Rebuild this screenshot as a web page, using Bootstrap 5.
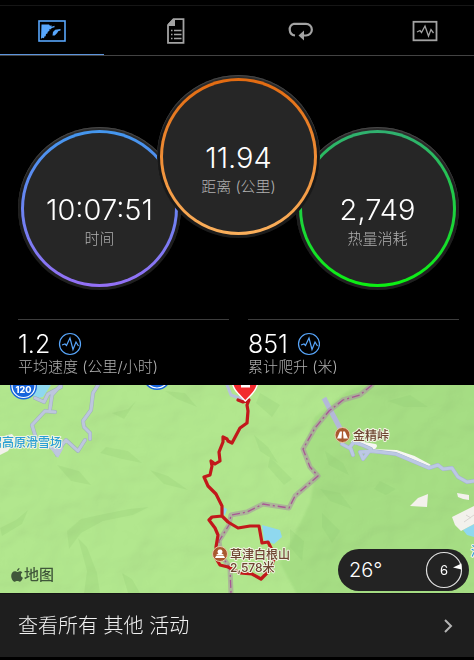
<!DOCTYPE html>
<html lang="zh-CN">
<head>
<meta charset="utf-8">
<meta name="viewport" content="width=device-width, initial-scale=1">
<title>活动</title>
<link href="https://cdn.jsdelivr.net/npm/bootstrap@5.3.0/dist/css/bootstrap.min.css" rel="stylesheet">
<style>
  body { background: #000; color: #fff; font-family: Inter, "Noto Sans CJK SC", sans-serif; }
  .tabs-bar { margin-top: 5px; height: 49px; gap: 20px; border-top: 1px solid #161616; border-bottom: 1px solid #434343; box-sizing: content-box; }
  .tab-btn { flex: 0 0 22%; height: 50px; padding: 2px 0 0; background: none; border: 0; border-bottom: 2px solid transparent; color: #a3a3a3; }
  .tab-btn.active { color: #58a6fb; border-bottom-color: #5c94dc; }
  .tab-btn svg { display: block; }
  .gauges { padding: 19px 0 29px 3px; }
  .gauge { flex: 0 0 163px; height: 163px; margin: 52px -12px 0; padding: 3px; border-radius: 50%; background: linear-gradient(#2c2c2c, #1c1c1c 40%, #202020); box-shadow: inset 0 1px 1px #4a4a4a; }
  .gauge.front { z-index: 1; margin-top: 0; background: linear-gradient(#2c2c2c, #161616 40%, #1c1c1c); }
  .dial { height: 100%; padding-top: 61px; border: 3px solid transparent; border-radius: 50%; }
  .dial-time { background: linear-gradient(#262626, #262626) padding-box, linear-gradient(#4397ee, #9470f6) border-box; }
  .dial-dist { background: linear-gradient(#262626, #262626) padding-box, linear-gradient(#e26a10, #fbb05c) border-box; }
  .dial-heat { background: linear-gradient(#262626, #262626) padding-box, linear-gradient(#30b070, #0cf012) border-box; }
  .big-num { font-size: 29px; line-height: 32px; font-weight: 350; margin-bottom: 3px; }
  .caption-text { font-size: 15px; line-height: 20px; font-weight: 300; color: #b0b0b0; white-space: nowrap; }
  .stats { padding: 0 15px 8px 18px; gap: 19px; }
  .stat { flex: 1 1 0; border-top: 1px solid #3d3d3d; padding-top: 11px; }
  .stat-num { font-size: 25px; line-height: 26px; font-weight: 350; }
  .map-box { height: 208px; }
  .map-box > svg { display: block; width: 100%; height: 100%; }
  .map-label { font-family: Inter, "Noto Sans CJK SC", sans-serif; font-weight: 500; font-size: 12px; fill: #6d4430; paint-order: stroke; stroke: #f0f4e2; stroke-width: 2px; stroke-linejoin: round; }
  .map-label.resort { fill: #2a9fd4; }
  .map-credit { left: 11px; bottom: 7px; gap: 1px; color: #40573a; font-size: 15px; line-height: 22px; font-weight: 500; }
  .weather { right: 5px; bottom: 2px; width: 131px; height: 42px; padding: 0 6px 0 11px; border-radius: 21px; background: #232323; font-size: 20px; font-weight: 300; }
  .see-all { padding: 18px; height: 64px; background: #1e1e1e; border-top: 1px solid #151515; color: #f2f2f2; font-size: 20px; font-weight: 300; line-height: 28px; }
  .see-all:hover { color: #fff; }
</style>
<script src="https://cdn.jsdelivr.net/npm/bootstrap@5.3.0/dist/js/bootstrap.bundle.min.js"></script>
</head>
<body>
<nav class="tabs-bar d-flex overflow-hidden" aria-label="活动视图">
  <button type="button" class="tab-btn active d-flex align-items-center justify-content-center" aria-label="概览">
    <svg width="28" height="22" viewBox="0 0 28 22"><rect x="1" y="1" width="26" height="20" fill="none" stroke="currentColor" stroke-width="1.6"/><path fill="currentColor" d="M3.500 4.500h7.500l1 1.200 1.500-.4v1.400l3-.9v1.500l-2.700.8-1 1.200-1.800.3.600 1.200-1.800 1-.4 1.700-1.400.5-.4 2.200-1.200.3-.4 1.800-1.500-.6-1.500 1zM15 12l2.200-2.200L22.500 9v1.600l-2.300.6-1 1.800-2.500 2.600H14.500z"/></svg>
  </button>
  <button type="button" class="tab-btn d-flex align-items-center justify-content-center" aria-label="统计">
    <svg width="20" height="26" viewBox="0 0 20 26"><path d="M7.500 1.200h10v23.600H2V7z" fill="none" stroke="currentColor" stroke-width="1.800"/><path d="M2 8V6l5-5h2v7z" fill="currentColor"/><path d="M5 12.500h1.500m1.500 0h7.500M5 16.500h1.500m1.500 0h7.500M5 20.500h1.500m1.500 0h7.500" stroke="currentColor" stroke-width="1.500"/></svg>
  </button>
  <button type="button" class="tab-btn d-flex align-items-center justify-content-center" aria-label="计圈">
    <svg width="28" height="20" viewBox="0 0 28 20"><path d="M8 14.500A6 6 0 0 1 7 2.800h12a5.800 5.800 0 0 1 0 11.700h-3" fill="none" stroke="currentColor" stroke-width="2.200"/><path d="M11.500 14.500l5.500-5v10z" fill="currentColor"/></svg>
  </button>
  <button type="button" class="tab-btn d-flex align-items-center justify-content-center" aria-label="图表">
    <svg width="26" height="22" viewBox="0 0 26 22"><rect x="1.500" y="1.800" width="23" height="18.500" fill="none" stroke="currentColor" stroke-width="1.800"/><path d="M5 12l3-1.500 1.500 2L13 6l3.500 10 2.500-6.500 2.500 3.500" fill="none" stroke="currentColor" stroke-width="1.300"/></svg>
  </button>
</nav>

<main>
  <section class="gauges d-flex justify-content-center text-center">
    <div class="gauge"><div class="dial dial-time"><div class="big-num">10:07:51</div><div class="caption-text">时间</div></div></div>
    <div class="gauge front position-relative"><div class="dial dial-dist"><div class="big-num">11.94</div><div class="caption-text">距离 (公里)</div></div></div>
    <div class="gauge"><div class="dial dial-heat"><div class="big-num">2,749</div><div class="caption-text">热量消耗</div></div></div>
  </section>

  <section class="stats d-flex">
    <div class="stat">
      <div class="d-flex align-items-center gap-2"><span class="stat-num">1.2</span>
        <svg width="24" height="24" viewBox="0 0 24 24" fill="none" stroke="#58a6fb"><circle cx="12" cy="12" r="10.500" stroke-width="1.200"/><path d="M4 13l3-1 1.500 1.500L12 6l3 11.500L18 10l2.500 4" stroke-width="1.200"/></svg></div>
      <div class="caption-text">平均速度 (公里/小时)</div>
    </div>
    <div class="stat">
      <div class="d-flex align-items-center gap-2"><span class="stat-num">851</span>
        <svg width="24" height="24" viewBox="0 0 24 24" fill="none" stroke="#58a6fb"><circle cx="13" cy="12" r="10.500" stroke-width="1.200"/><path d="M5 13l3-1 1.500 1.500L13 6l3 11.500L19 10l2.500 4" stroke-width="1.200"/></svg></div>
      <div class="caption-text">累计爬升 (米)</div>
    </div>
  </section>

  <section class="map-box position-relative overflow-hidden">
    <svg viewBox="0 0 474 208" preserveAspectRatio="xMidYMid slice" role="img" aria-label="路线地图">
      <defs>
        <filter id="relief" x="0" y="0" width="100%" height="100%">
          <feTurbulence type="fractalNoise" baseFrequency=".02 .024" numOctaves="3" seed="8"/>
          <feColorMatrix values="0 0 0 0 0  0 0 0 0 0  0 0 0 0 0  1 0 0 0 0"/>
          <feDiffuseLighting surfaceScale="9" lighting-color="#fff"><feDistantLight azimuth="225" elevation="60"/></feDiffuseLighting>
        </filter>
        <filter id="soften"><feGaussianBlur stdDeviation="1"/></filter>
        <path id="roads" d="M61 0L52 10 50 24M61 2L48 9 44 17 35 13M55 27L45 26 32 40 36 53 44 60 54 63 57 70 62 60 66 55 78 66 85 55M98 0L93 8 91 25 83 36 84 42 90 48 90 54"/>
        <path id="pass-road" d="M342 59L351 64 353 70 350 62 354 57 362 60 371 64 363 74 360 67 372 66 396 69 429 83 438 80 443 84 452 83 458 92 467 97 474 96"/>
        <path id="border-line" d="M372 0L360 10 343 15 329 26 315 43 303 64 310 82 318 91 295 111 289 123 263 119 247 127 231 130 229 140 219 156 221 170 230 183 231 208"/>
      </defs>
      <rect width="474" height="208" fill="#b2e78e"/>
      <path d="M372 -5h110v220H300l-20-37 30-60 5-28-12-26 12-32 30-24z" fill="#a6de84" filter="url(#soften)"/>
      <rect width="474" height="208" filter="url(#relief)" opacity=".12" style="mix-blend-mode:multiply"/>
      <g fill="#8fc771" opacity=".22">
        <path d="M57 80l22 6 12 14-20-4zM106 62l22 4 14 12-20-4-22-6zM0 143l16-8 12-10-6 14-20 12zM78 153l9 9 10 26 3 20H84l3-22zM67 146l14-12 18-4 30-6 20-2-16 8-30 6-22 12-12 16zM122 188l10 6 8 14h-12zM112 28l16-4 8-8-12 18zM165 6l20 2 12 14-20-8zM150 85l18 6 20 14-24-6z"/>
        <path d="M260 8l20 12-8 12-16-14zM254 50l14 12 10 16-18-12zM270 72l22 22-8 6-16-18zM325 66l18 12 6 12-20-10zM320 104l20 4 12 16-22-8zM380 96l16 8-10 6-12-6zM322 128l18 18-8 12-10-16zM388 16l22-6 18 12-24 0zM290 144l14 12-2 20-12-14z"/>
      </g>
      <g fill="#8fd8ef">
        <path d="M36 0h15l-8 12-10 2zM262 140l18 5 2 7-8 7-10-4zM223 122l4 2-2 6-3-1zM463 145l11-6v13l-7-2z"/>
      </g>
      <path d="M0 52l12-3 4 5-8 12-8 4zM410 121l8-8 10-4-1 13zM457 108l12 2v5l-6-1-5-2zM452 132l10-5 12-6v18l-13 7-6-6z" fill="#f3f1ec"/>
      <path d="M464 137l10-7M466 130l5 3" stroke="#d8d4d0" fill="none"/>
      <g fill="none" stroke-linejoin="round" stroke-linecap="round">
        <use href="#roads" stroke="#9db0b9" stroke-width="4"/>
        <use href="#roads" stroke="#bdc6de" stroke-width="3"/>
        <path d="M49 61l14 2-5 9z" fill="#bdc6de" stroke="#bdc6de"/>
        <path d="M227 0L231 10 242 14" stroke="#b7c2dc" stroke-width="3"/>
        <path d="M324 13L342 47" stroke="#b3b8d8" stroke-width="5" stroke-linecap="butt"/>
        <path d="M353 57L375 61 371 66 396 67 414 73 429 81" stroke="#f6f6f2" stroke-width="4"/>
        <use href="#pass-road" stroke="#a4b2cf" stroke-width="4"/>
        <use href="#pass-road" stroke="#bcc8e4" stroke-width="3"/>
        <use href="#border-line" stroke="#a895a0" stroke-width="5" opacity=".6"/>
        <use href="#border-line" stroke="#a85894" stroke-width="1.300" stroke-dasharray="8 3 2 3" stroke-linecap="butt"/>
        <path d="M238 15L243 17 249 15 247 20 248 26 247 38 240 43 232 58 228 56 227 54 223 52 223 57 219 67 220 76 215 79 211 76 212 81 210 90 204 92 208 101 216 109 222 121 222 131 212 132 209 135 215 143 218 150 216 162 217 175 220 180 228 182 240 188 252 189 261 194 270 185 274 174 272 165 268 157 262 158 259 141 250 141 238 143 228 137 222 131" stroke="#c2181b" stroke-width="3.200"/>
      </g>
      <g>
        <circle cx="23.500" cy="1" r="13.500" fill="#1765dc"/><circle cx="23.500" cy="1" r="11.500" fill="#1765dc" stroke="#fff" stroke-width="1.200"/>
        <text x="23.500" y="8" text-anchor="middle" fill="#fff" font-family="Inter, sans-serif" font-size="9" font-weight="800">120</text>
        <circle cx="157" cy="-9" r="14" fill="#1765dc"/><circle cx="157" cy="-9" r="12" fill="#1765dc" stroke="#fff" stroke-width="1.200"/>
      </g>
      <path d="M232-4c1 9 7 13 13.300 20C252 9 257 5 258-4z" fill="#f22c2f" stroke="#fff" stroke-width="1.400"/><path d="M241 0h9v2.500h-9z" fill="#fff"/>
      <g fill="#a9582f" stroke="#e5c9a8" stroke-width="1"><circle cx="342.500" cy="50" r="7.500"/><circle cx="220" cy="169" r="7.500"/></g>
      <path d="M337 53.500l3-7h2l-.5 7zM348 53.500l-3-7h-2l.5 7zM220 164.500a2.200 2.200 0 0 1 1.500 4l2 1v1h-7v-1l2-1a2.200 2.200 0 0 1 1.500-4zM216 171h8l1 2h-10z" fill="#fff"/>
      <text class="map-label" x="353" y="55">金精峠</text>
      <text class="map-label" x="230" y="174">草津白根山</text>
      <text class="map-label" x="230" y="187">2,578米</text>
      <text class="map-label resort" x="62" y="62" text-anchor="end">沼高原滑雪场</text>
      <text class="map-label resort" x="471" y="171">湯</text>
    </svg>
    <div class="map-credit position-absolute d-flex align-items-center">
      <svg width="12" height="14" viewBox="0 0 12 14" fill="currentColor" aria-hidden="true"><path d="M8.500 0c.1 1.500-1 3-2.500 3C5.900 1.500 7.200.2 8.500 0zM6.200 4c.6 0 1.300-.8 2.600-.8 1.100 0 2 .5 2.600 1.300-2.300 1.300-1.900 4.400.5 5.300-.5 1.500-1.700 3.900-3.100 3.900-1 0-1.300-.6-2.500-.6s-1.600.6-2.500.6C2.100 13.700.2 10.700.2 7.900.2 5 2 3.300 3.800 3.300c1.200 0 1.900.7 2.400.7z"/></svg>
      <span>地图</span>
    </div>
    <div class="weather position-absolute d-flex align-items-center justify-content-between">
      <span>26°</span>
      <svg width="38" height="38" viewBox="0 0 38 38" role="img" aria-label="风速 6"><circle cx="19" cy="19" r="17.500" fill="none" stroke="#e0e0e0" stroke-width="1.200"/><path d="M28 16.500l8.500-4v6z" fill="#fff"/><text x="19" y="24" text-anchor="middle" fill="#fff" font-family="Inter, sans-serif" font-size="13" font-weight="400">6</text></svg>
    </div>
  </section>
  <a href="#" class="see-all d-flex align-items-center justify-content-between text-decoration-none"><span>查看所有 其他 活动</span>
    <svg width="16" height="16" viewBox="0 0 16 16" fill="none" stroke="#b4b4b4" stroke-width="2" aria-hidden="true"><path d="M5 2l6 6-6 6"/></svg></a>
</main>
</body>
</html>
